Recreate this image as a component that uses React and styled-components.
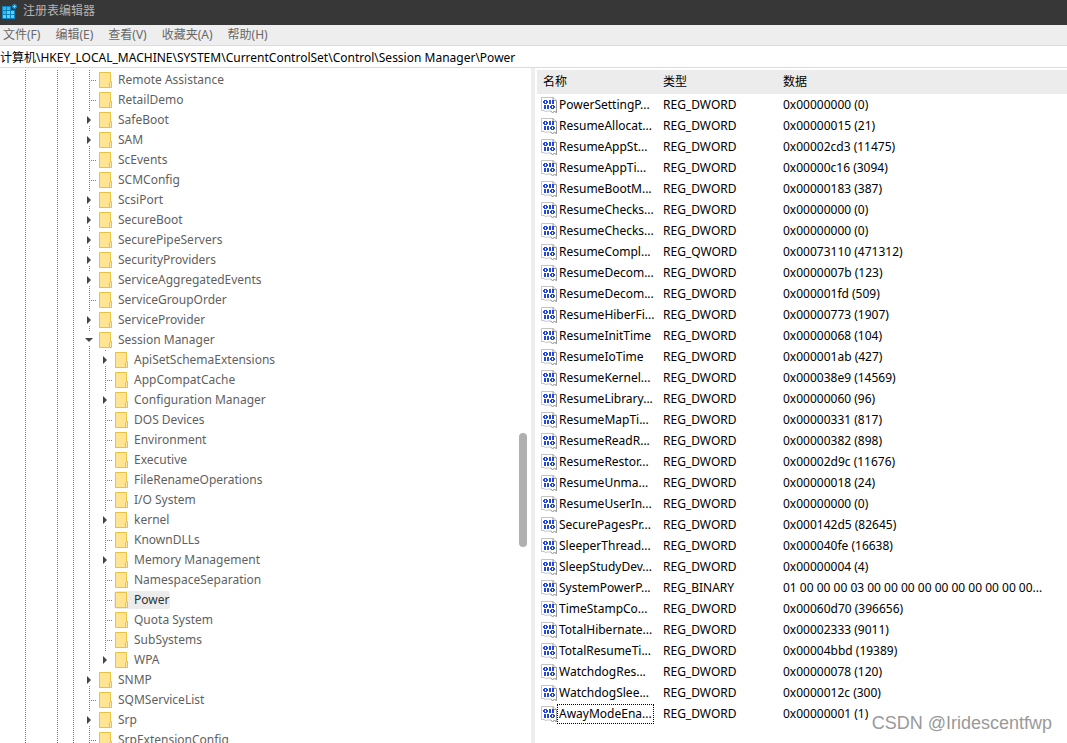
import React, { useState } from "react";
import styled, { createGlobalStyle } from "styled-components";

const menus = ["文件(F)", "编辑(E)", "查看(V)", "收藏夹(A)", "帮助(H)"];

// depth 0 = child of Control, depth 1 = child of Session Manager
const keys = [
  { name: "Remote Assistance", depth: 0 },
  { name: "RetailDemo", depth: 0 },
  { name: "SafeBoot", depth: 0, toggle: "closed" },
  { name: "SAM", depth: 0, toggle: "closed" },
  { name: "ScEvents", depth: 0 },
  { name: "SCMConfig", depth: 0 },
  { name: "ScsiPort", depth: 0, toggle: "closed" },
  { name: "SecureBoot", depth: 0, toggle: "closed" },
  { name: "SecurePipeServers", depth: 0, toggle: "closed" },
  { name: "SecurityProviders", depth: 0, toggle: "closed" },
  { name: "ServiceAggregatedEvents", depth: 0, toggle: "closed" },
  { name: "ServiceGroupOrder", depth: 0 },
  { name: "ServiceProvider", depth: 0, toggle: "closed" },
  { name: "Session Manager", depth: 0, toggle: "open" },
  { name: "ApiSetSchemaExtensions", depth: 1, toggle: "closed" },
  { name: "AppCompatCache", depth: 1 },
  { name: "Configuration Manager", depth: 1, toggle: "closed" },
  { name: "DOS Devices", depth: 1 },
  { name: "Environment", depth: 1 },
  { name: "Executive", depth: 1 },
  { name: "FileRenameOperations", depth: 1 },
  { name: "I/O System", depth: 1 },
  { name: "kernel", depth: 1, toggle: "closed" },
  { name: "KnownDLLs", depth: 1 },
  { name: "Memory Management", depth: 1, toggle: "closed" },
  { name: "NamespaceSeparation", depth: 1 },
  { name: "Power", depth: 1 },
  { name: "Quota System", depth: 1 },
  { name: "SubSystems", depth: 1 },
  { name: "WPA", depth: 1, toggle: "closed", last: true },
  { name: "SNMP", depth: 0, toggle: "closed" },
  { name: "SQMServiceList", depth: 0 },
  { name: "Srp", depth: 0, toggle: "closed" },
  { name: "SrpExtensionConfig", depth: 0 },
];

const values = [
  ["PowerSettingP...", "REG_DWORD", "0x00000000 (0)"],
  ["ResumeAllocat...", "REG_DWORD", "0x00000015 (21)"],
  ["ResumeAppSt...", "REG_DWORD", "0x00002cd3 (11475)"],
  ["ResumeAppTi...", "REG_DWORD", "0x00000c16 (3094)"],
  ["ResumeBootM...", "REG_DWORD", "0x00000183 (387)"],
  ["ResumeChecks...", "REG_DWORD", "0x00000000 (0)"],
  ["ResumeChecks...", "REG_DWORD", "0x00000000 (0)"],
  ["ResumeCompl...", "REG_QWORD", "0x00073110 (471312)"],
  ["ResumeDecom...", "REG_DWORD", "0x0000007b (123)"],
  ["ResumeDecom...", "REG_DWORD", "0x000001fd (509)"],
  ["ResumeHiberFi...", "REG_DWORD", "0x00000773 (1907)"],
  ["ResumeInitTime", "REG_DWORD", "0x00000068 (104)"],
  ["ResumeIoTime", "REG_DWORD", "0x000001ab (427)"],
  ["ResumeKernel...", "REG_DWORD", "0x000038e9 (14569)"],
  ["ResumeLibrary...", "REG_DWORD", "0x00000060 (96)"],
  ["ResumeMapTi...", "REG_DWORD", "0x00000331 (817)"],
  ["ResumeReadR...", "REG_DWORD", "0x00000382 (898)"],
  ["ResumeRestor...", "REG_DWORD", "0x00002d9c (11676)"],
  ["ResumeUnma...", "REG_DWORD", "0x00000018 (24)"],
  ["ResumeUserIn...", "REG_DWORD", "0x00000000 (0)"],
  ["SecurePagesPr...", "REG_DWORD", "0x000142d5 (82645)"],
  ["SleeperThread...", "REG_DWORD", "0x000040fe (16638)"],
  ["SleepStudyDev...", "REG_DWORD", "0x00000004 (4)"],
  ["SystemPowerP...", "REG_BINARY", "01 00 00 00 03 00 00 00 00 00 00 00 00 00 00..."],
  ["TimeStampCo...", "REG_DWORD", "0x00060d70 (396656)"],
  ["TotalHibernate...", "REG_DWORD", "0x00002333 (9011)"],
  ["TotalResumeTi...", "REG_DWORD", "0x00004bbd (19389)"],
  ["WatchdogRes...", "REG_DWORD", "0x00000078 (120)"],
  ["WatchdogSlee...", "REG_DWORD", "0x0000012c (300)"],
  ["AwayModeEna...", "REG_DWORD", "0x00000001 (1)"],
];

function AppIcon() {
  return (
    <svg width="16" height="16" viewBox="0 0 16 16" shapeRendering="crispEdges" aria-hidden="true">
      <path fill="#0b84bd" d="M1 3h9v4h4v9H1z" />
      <path fill="#38b6ea" d="M2 4h3v3H2zM6 4h3v3H6zM2 8h3v3H2z" />
      <path fill="#5fd0f8" d="M6 8h3v3H6zM10 8h3v3h-3zM2 12h3v3H2zM6 12h3v3H6zM10 12h3v3h-3z" />
      <path fill="#0b84bd" d="M11 2h5v3h-5zM12 1h3v5h-3z" />
      <path fill="#5fd0f8" d="M13 2h1v1h1v1h-1v1h-1V4h-1V3h1z" />
    </svg>
  );
}

function FolderIcon() {
  return (
    <svg width="14" height="16" viewBox="0 0 14 16" aria-hidden="true">
      <path fill="#ffe592" stroke="#e9c243" d="M0.5 0.5h11v9h1v6h-12z" />
      <path fill="#ffe9a6" stroke="#e9c243" d="M10.5 15v-4.500l1-1h1v6h-2z" />
    </svg>
  );
}

function ValueIcon() {
  return (
    <svg width="16" height="16" viewBox="0 0 16 16" aria-hidden="true">
      <path fill="#fff" stroke="#c4c4c4" d="M0.500 0.500h11.500l3.500 3v12l-2-1-2 1-2-1.500h-3l-2 .5-1.500-1h-2.500z" />
      <path fill="none" stroke="#9a9a9a" d="M12 0.500v3h3.500v12l-2-1-2 1-2-1.500" />
      <g shapeRendering="crispEdges" fill="#2449d8">
        <path fillRule="evenodd" d="M3 3h3v1h1v2H6v1H3V6H2V4h1zM4 4v2h1V4z" />
        <path d="M8 3h2v4H8zM11 3h2v4h-2zM3 8h2v4H3zM6 8h2v4H6z" />
        <path fillRule="evenodd" d="M10 8h3v1h1v2h-1v1h-3v-1H9V9h1zM11 9v2h1V9z" />
      </g>
    </svg>
  );
}

function App() {
  const [selected, setSelected] = useState("Power");
  const [path, setPath] = useState(
    "计算机\\HKEY_LOCAL_MACHINE\\SYSTEM\\CurrentControlSet\\Control\\Session Manager\\Power"
  );

  return (
    <Window>
      <GlobalStyle />
      <TitleBar>
        <AppIcon />
        <Title>注册表编辑器</Title>
      </TitleBar>
      <MenuBar>
        {menus.map((m) => (
          <MenuButton key={m} type="button">{m}</MenuButton>
        ))}
      </MenuBar>
      <Address aria-label="地址" value={path} onChange={(e) => setPath(e.target.value)} />
      <Panes>
        <TreePane>
          <Tree>
            {keys.map((k) => (
              <TreeRow key={k.name}>
                <Guide $line />
                <Guide />
                <Guide $line />
                <Guide $line />
                {k.depth === 1 && <Guide $line />}
                {k.toggle ? (
                  <Toggle type="button" aria-label={k.name} aria-expanded={k.toggle === "open"} $last={k.last}>
                    <Arrow $open={k.toggle === "open"} />
                  </Toggle>
                ) : (
                  <Branch />
                )}
                <KeyButton type="button" $active={selected === k.name} onClick={() => setSelected(k.name)}>
                  <FolderIcon />
                  {k.name}
                </KeyButton>
              </TreeRow>
            ))}
          </Tree>
          <Thumb />
        </TreePane>
        <Splitter />
        <ValuePane>
          <Table>
            <colgroup>
              <Column />
              <Column />
              <col />
            </colgroup>
            <thead>
              <tr>
                <Head>名称</Head>
                <Head>类型</Head>
                <Head>数据</Head>
              </tr>
            </thead>
            <tbody>
              {values.map(([name, type, data], i) => (
                <tr key={i}>
                  <Cell $name>
                    <NameWrap>
                      <ValueIcon />
                      <Name $focused={i === values.length - 1}>{name}</Name>
                    </NameWrap>
                  </Cell>
                  <Cell>{type}</Cell>
                  <Cell>{data}</Cell>
                </tr>
              ))}
            </tbody>
          </Table>
        </ValuePane>
      </Panes>
      <Watermark>CSDN @Iridescentfwp</Watermark>
    </Window>
  );
}

export default App;

const GlobalStyle = createGlobalStyle`
  * {
    box-sizing: border-box;
  }
  body {
    margin: 0;
    background: #fff;
  }
  body, button, input {
    font-family: "Noto Sans", "Noto Sans CJK SC", sans-serif;
    font-size: 12px;
  }
  button {
    border: none;
    background: none;
    padding: 0;
    color: inherit;
  }
`;

const Window = styled.div`
  position: relative;
  display: flex;
  flex-direction: column;
  height: 100vh;
  overflow: hidden;
`;

const TitleBar = styled.header`
  display: flex;
  align-items: center;
  flex: none;
  gap: 6px;
  height: 25px;
  padding: 0 1px 4px;
  background: #373737;
`;

const Title = styled.h1`
  margin: 0;
  font-size: 12px;
  font-weight: 400;
  line-height: 20px;
  color: #b4b4b4;
`;

const MenuBar = styled.nav`
  display: flex;
  align-items: center;
  flex: none;
  gap: 15px;
  height: 21px;
  padding: 0 3px;
  background: #eeeeee;
  border-bottom: 1px solid #dcdcdc;
`;

const MenuButton = styled.button`
  line-height: 20px;
  color: #686868;
`;

const Address = styled.input`
  flex: none;
  width: 100%;
  height: 22px;
  padding: 0;
  border: none;
  border-bottom: 1px solid #dcdcdc;
  outline: none;
  color: #000;
`;

const Panes = styled.main`
  display: grid;
  grid-template-columns: minmax(0, 1fr) 5px minmax(0, 1fr);
  flex: 1;
  min-height: 0;
`;

const TreePane = styled.div`
  position: relative;
  min-height: 0;
  overflow: hidden;
`;

const Tree = styled.ul`
  margin: 0;
  padding: 2px 0 0 17px;
  list-style: none;
  color: #5f5f5f;
`;

const TreeRow = styled.li`
  display: flex;
  height: 20px;
`;

const dots = "repeating-linear-gradient(to bottom, #7d7d7d 0 1px, transparent 1px 2px)";
const dotsAcross = "repeating-linear-gradient(to right, #7d7d7d 0 1px, transparent 1px 2px)";

const Guide = styled.span`
  flex: none;
  width: 16px;
  background: ${(p) => (p.$line ? `${dots} 8px 0 / 1px 100% no-repeat` : "none")};
`;

const Branch = styled(Guide)`
  background:
    ${dots} 8px 0 / 1px 100% no-repeat,
    ${dotsAcross} 8px 10px / 8px 1px no-repeat;
`;

const Toggle = styled.button`
  display: flex;
  align-items: center;
  justify-content: center;
  flex: none;
  width: 16px;
  background:
    ${dots} 8px 0 / 1px 2px no-repeat,
    ${dots} 8px 16px / 1px ${(p) => (p.$last ? "0" : "4px")} no-repeat;
`;

const Arrow = styled.span`
  width: ${(p) => (p.$open ? "8px" : "4px")};
  height: ${(p) => (p.$open ? "4px" : "8px")};
  background: #454545;
  clip-path: ${(p) =>
    p.$open ? "polygon(0 0, 100% 0, 50% 100%)" : "polygon(0 0, 100% 50%, 0 100%)"};
`;

const KeyButton = styled.button`
  display: flex;
  align-items: center;
  gap: 5px;
  height: 18px;
  margin: 1px 0 1px 1px;
  padding: 0 1px;
  border-radius: 3px;
  line-height: 18px;
  white-space: nowrap;
  background: ${(p) => (p.$active ? "#ececec" : "transparent")};
  color: ${(p) => (p.$active ? "#333" : "inherit")};
`;

const Thumb = styled.span`
  position: absolute;
  top: 54%;
  right: 4px;
  width: 8px;
  height: 17%;
  border-radius: 4px;
  background: #b0b0b0;
`;

const Splitter = styled.div`
  background: #eeeeee;
  border-right: 1px solid #fff;
`;

const ValuePane = styled.section`
  min-height: 0;
  padding: 2px 0 0 1px;
  overflow: hidden;
`;

const Table = styled.table`
  width: 100%;
  table-layout: fixed;
  border-collapse: collapse;
  color: #000;
`;

const Column = styled.col`
  width: 120px;
`;

const Head = styled.th`
  height: 24px;
  padding: 0 6px;
  background: #ececec;
  font-size: 12px;
  font-weight: 400;
  line-height: 20px;
  text-align: left;
`;

const Cell = styled.td`
  height: 21px;
  padding: ${(p) => (p.$name ? "0 0 0 4px" : "0 0 0 6px")};
  font-size: 12px;
  line-height: 18px;
  white-space: nowrap;
`;

const NameWrap = styled.div`
  display: flex;
  align-items: center;
`;

const Name = styled.span`
  min-width: 0;
  padding: 0 1px;
  border: 1px dotted ${(p) => (p.$focused ? "#000" : "transparent")};
  line-height: 18px;
`;

const Watermark = styled.div`
  position: absolute;
  right: 15px;
  bottom: 8px;
  font-family: "Liberation Sans", Arial, sans-serif;
  font-size: 18px;
  line-height: 24px;
  color: #999;
`;
